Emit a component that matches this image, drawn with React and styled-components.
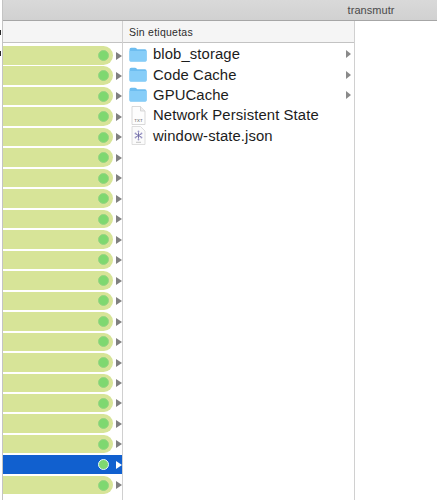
import React from "react";
import styled, { createGlobalStyle } from "styled-components";

const Global = createGlobalStyle`
  html, body { margin: 0; padding: 0; background: #fff; }
  body { font-family: "Liberation Sans", Arial, sans-serif; overflow: hidden; }
`;
const Page = styled.div`width: 437px; height: 500px; overflow: hidden; display: flex; background: #fff;`;
const Gutter = styled.aside`
  width: 2px; flex: none; border-right: 1px solid #c4c4c4; display: flex; flex-direction: column;
`;
const GutterMark = styled.span`
  width: 1px; height: 5px; flex: none; background: #2a2a2a; margin-top: ${p => p.$top}px;
`;
const Content = styled.div`flex: 1; min-width: 0; display: flex; flex-direction: column;`;
const TitleBar = styled.header`
  height: 20px; flex: none; background: linear-gradient(#d9d9d9, #d1d1d1); border-bottom: 1px solid #a6a6a6;
  display: flex; align-items: center; justify-content: flex-end; padding-right: 42.5px;
  font-size: 11px; color: #4a4a4a; letter-spacing: 0.05px;
`;
const Columns = styled.main`flex: 1; display: flex; min-height: 0;`;
const LeftColumn = styled.section`
  width: 119px; flex: none; border-right: 1px solid #d0d0d0; display: flex; flex-direction: column;
`;
const MiddleColumn = styled.section`
  width: 231px; flex: none; border-right: 1px solid #d0d0d0; display: flex; flex-direction: column;
`;
const HeaderCell = styled.div`
  height: 21px; flex: none; background: #f5f5f5; border-bottom: 1px solid #c3c3c3;
  display: flex; align-items: center; padding-left: 6px;
  font-size: 10.5px; color: #2c2c2c; letter-spacing: 0.25px;
`;
const RowList = styled.div`padding-top: 3px; display: flex; flex-direction: column;`;
const TagRow = styled.div`height: 20.48px; flex: none; display: flex; align-items: flex-start;`;
const Pill = styled.div`
  width: 110px; height: 18.5px; flex: none; display: flex; align-items: center; justify-content: flex-end;
  padding-right: 4px; box-sizing: border-box;
  background: #d7e498; border-radius: 0 10px 10px 0;
`;
const ActiveBar = styled.div`
  width: 119px; height: 18.5px; flex: none; display: flex; align-items: center; background: #1160cf;
`;
const Dot = styled.span`
  width: 11px; height: 11px; border-radius: 50%; flex: none; box-sizing: border-box;
  background: #7ed870;
  border: 1px solid ${p => (p.$active ? "#e8f4ff" : "#96d482")};
  ${p => p.$active && "margin-left: 95px;"}
`;
const Arrow = styled.span`
  width: 0; height: 0; flex: none; margin-top: ${p => (p.$active ? "0" : "5.5px")};
  margin-left: ${p => (p.$active ? "7px" : "3px")};
  border-top: 4px solid transparent; border-bottom: 4px solid transparent;
  border-left: 6px solid ${p => (p.$active ? "#ffffff" : "#808080")};
`;
const FileList = styled.div`padding-top: 1px; display: flex; flex-direction: column;`;
const FileRow = styled.div`
  height: 20.4px; flex: none; display: flex; align-items: center; padding-left: 6px; padding-right: 3px;
`;
const IconSlot = styled.span`width: 18px; height: 19px; flex: none; display: flex; align-items: center; justify-content: center;`;
const FileName = styled.span`
  margin-left: 6px; flex: 1; font-size: 14.85px; color: #1c1c1c; white-space: nowrap; letter-spacing: 0.1px;
`;
const SmallArrow = styled.span`
  width: 0; height: 0; flex: none;
  border-top: 4px solid transparent; border-bottom: 4px solid transparent;
  border-left: 5.5px solid #8a8a8a;
`;

const Folder = () => (
  <svg width="18" height="15" viewBox="0 0 18 15">
    <path d="M0.5 2.5 Q0.5 0.7 2.2 0.7 H6 Q7 0.7 7.6 1.6 L8.2 2.3 H16 Q17.6 2.3 17.6 4 V13 Q17.6 14.6 16 14.6 H2 Q0.5 14.6 0.5 13 Z" fill="#6dbdf0" />
    <path d="M0.5 4 H17.6 V13 Q17.6 14.6 16 14.6 H2 Q0.5 14.6 0.5 13 Z" fill="#86cdf8" />
  </svg>
);
const TxtDoc = () => (
  <svg width="15" height="19" viewBox="0 0 15 19">
    <path d="M1 0.5 H9.5 L14 5 V18.5 H1 Z" fill="#fdfdfd" stroke="#cfcfcf" strokeWidth="0.8" />
    <path d="M9.5 0.5 V5 H14" fill="#eee" stroke="#cfcfcf" strokeWidth="0.8" />
    <text x="7.5" y="15.5" fontSize="4.4" textAnchor="middle" fill="#555" fontFamily="Liberation Sans, sans-serif">TXT</text>
  </svg>
);
const JsonDoc = () => (
  <svg width="15" height="19" viewBox="0 0 15 19">
    <path d="M1 0.5 H9.5 L14 5 V18.5 H1 Z" fill="#fbfbfb" stroke="#d5d5d5" strokeWidth="0.8" />
    <g fill="#9a95c6">
      <circle cx="7.5" cy="5.5" r="0.9" />
      <circle cx="4.5" cy="7.5" r="0.9" />
      <circle cx="10.5" cy="7.5" r="0.9" />
      <circle cx="4.5" cy="11.5" r="0.9" />
      <circle cx="10.5" cy="11.5" r="0.9" />
      <circle cx="7.5" cy="13.5" r="0.9" />
    </g>
    <path d="M7.5 6.5 V12.5 M5 8 L10 11 M10 8 L5 11" stroke="#6a65a3" strokeWidth="0.9" />
    <rect x="5" y="15.8" width="5" height="1" fill="#c2c2c2" />
  </svg>
);

const files = [
  { name: "blob_storage", icon: <Folder />, more: true },
  { name: "Code Cache", icon: <Folder />, more: true },
  { name: "GPUCache", icon: <Folder />, more: true },
  { name: "Network Persistent State", icon: <TxtDoc /> },
  { name: "window-state.json", icon: <JsonDoc /> },
];

export default function App() {
  return (
    <Page>
      <Global />
      <Gutter>
        <GutterMark $top={30} />
        <GutterMark $top={16} />
      </Gutter>
      <Content>
        <TitleBar>transmutr</TitleBar>
        <Columns>
          <LeftColumn>
            <HeaderCell />
            <RowList>
              {Array.from({ length: 22 }, (_, i) =>
                i === 20 ? (
                  <TagRow key={i}>
                    <ActiveBar><Dot $active /><Arrow $active /></ActiveBar>
                  </TagRow>
                ) : (
                  <TagRow key={i}>
                    <Pill><Dot /></Pill><Arrow />
                  </TagRow>
                )
              )}
            </RowList>
          </LeftColumn>
          <MiddleColumn>
            <HeaderCell>Sin etiquetas</HeaderCell>
            <FileList>
              {files.map(f => (
                <FileRow key={f.name}>
                  <IconSlot>{f.icon}</IconSlot>
                  <FileName>{f.name}</FileName>
                  {f.more && <SmallArrow />}
                </FileRow>
              ))}
            </FileList>
          </MiddleColumn>
        </Columns>
      </Content>
    </Page>
  );
}
